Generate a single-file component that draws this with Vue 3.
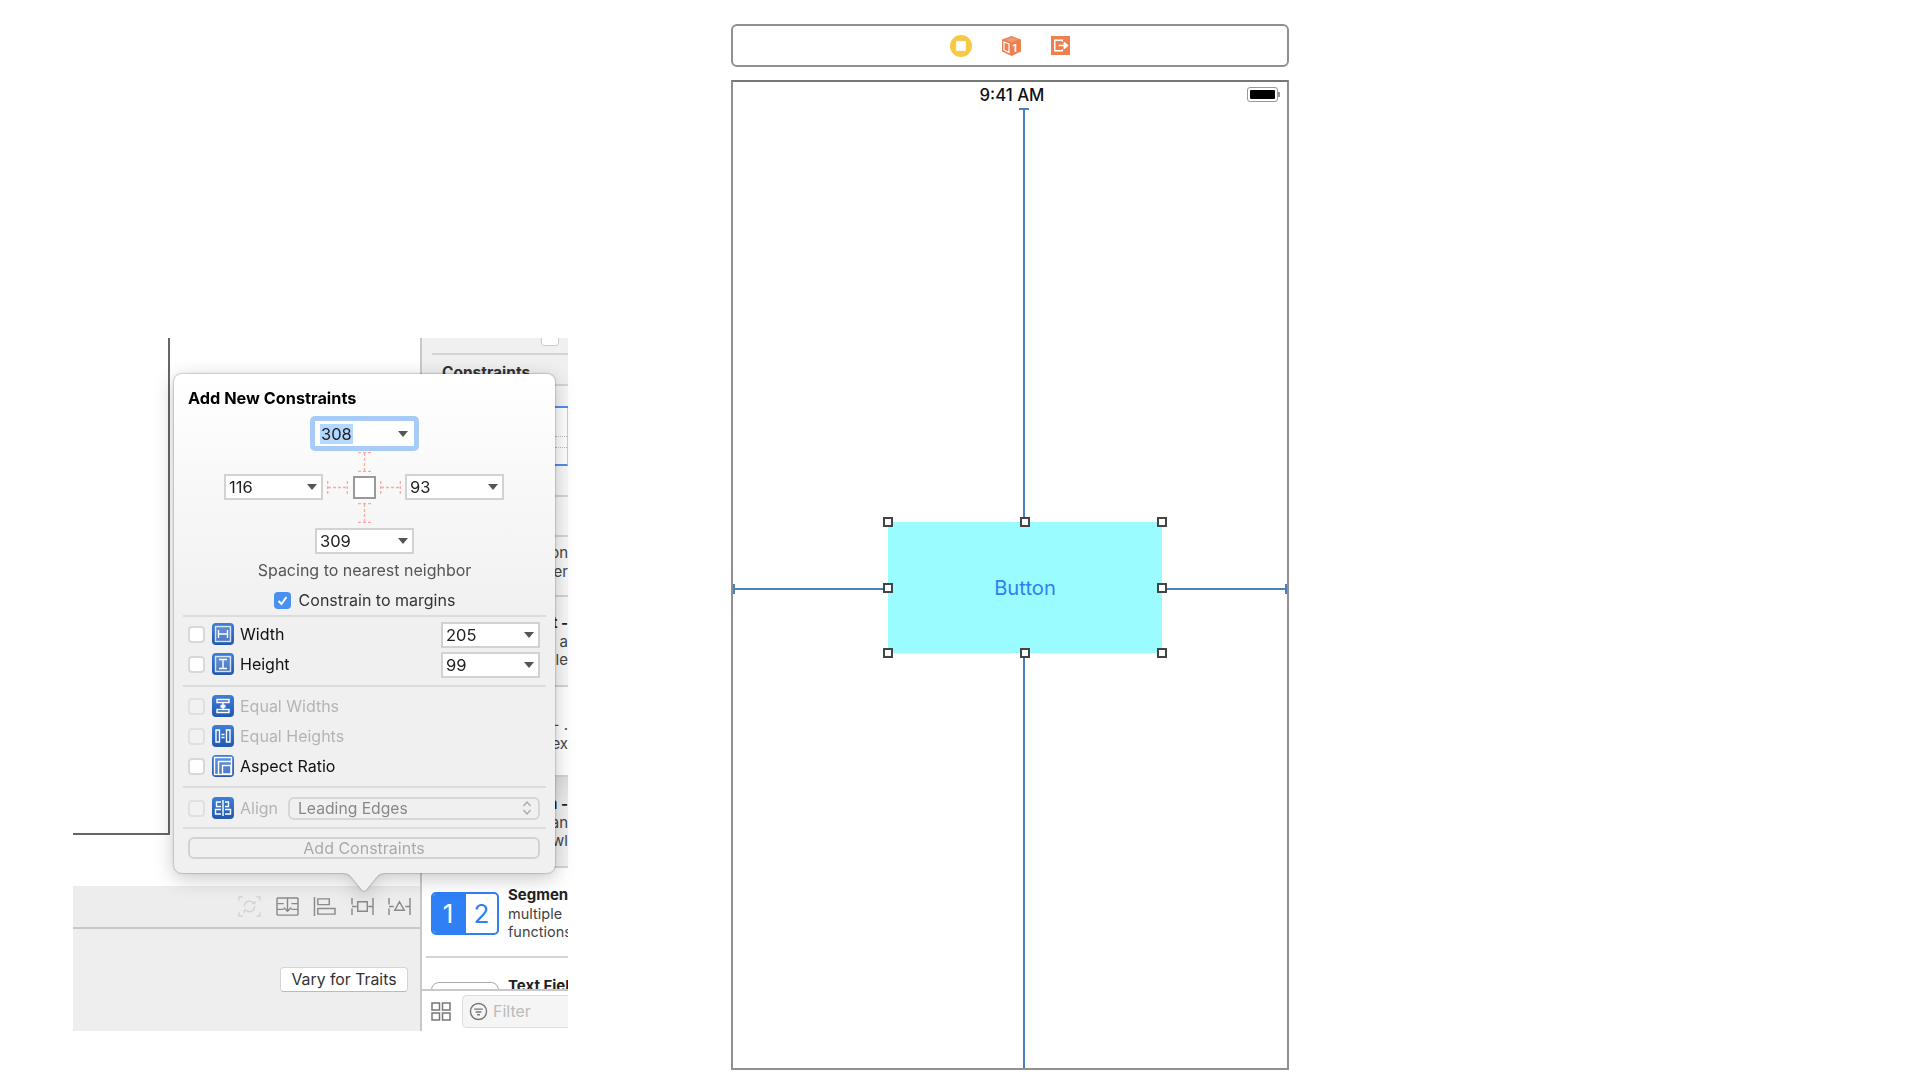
<script setup>
const rows1 = [
  { label: 'Width', icon: 'w', value: '205', on: true },
  { label: 'Height', icon: 'h', value: '99', on: true },
]
const rows2 = [
  { label: 'Equal Widths', icon: 'ew', on: false },
  { label: 'Equal Heights', icon: 'eh', on: false },
  { label: 'Aspect Ratio', icon: 'ar', on: true },
]
const handles = [
  [0, 0], [50, 0], [100, 0], [0, 50], [100, 50], [0, 100], [50, 100], [100, 100],
]
</script>

<template>
  <div class="page">
    <div class="shot">
      <div class="main-col">
        <div class="canvas"><div class="canvas-box"></div></div>
        <div class="toolbar">
          <svg class="tool dim" viewBox="0 0 24 22" fill="none" stroke="currentColor" stroke-width="1.3">
            <path d="M1 5V1h4M19 1h4v4M23 17v4h-4M5 21H1v-4" />
            <path d="M6.5 11a5.5 5.5 0 0 1 10-3.2M17.5 11a5.5 5.5 0 0 1-9 4.2" />
            <path d="M15 8h2.5V5M9 15H6.5v3" />
          </svg>
          <svg class="tool" viewBox="0 0 24 22" fill="none" stroke="currentColor" stroke-width="1.5">
            <path d="M1 2h22M1 20h22M1 2v18M23 2v18M1 8h7M16 8h7M1 14h7M16 14h7M12 3v13M8 12l4 4 4-4" />
          </svg>
          <svg class="tool" viewBox="0 0 24 22" fill="none" stroke="currentColor" stroke-width="1.5">
            <path d="M1.5 1v20M5 3h12v6H5zM5 13h18v6H5z" />
          </svg>
          <svg class="tool" viewBox="0 0 24 22" fill="none" stroke="currentColor" stroke-width="1.5">
            <path d="M1 2v7M1 13v7M1 11h5M23 2v18M18 11h5M7 6h10v10H7z" />
          </svg>
          <svg class="tool" viewBox="0 0 24 22" fill="none" stroke="currentColor" stroke-width="1.5">
            <path d="M1 2v7M1 13v7M1 11h5M23 2v18M18 11h5M12 6l5 9H7z" />
          </svg>
        </div>
        <div class="traits"><button class="vary">Vary for Traits</button></div>
      </div>

      <aside class="lib">
        <div class="lib-top">
          <div class="stub-box"></div>
          <div class="lib-rule"></div>
          <div class="lib-head">Constraints</div>
        </div>
        <div class="lib-stubs">
          <div class="stub s1"></div>
          <div class="stub s2"><i></i><i></i></div>
          <div class="stub s3"></div>
          <div class="stub s3b"></div>
          <div class="stub s4"><span>on</span><span>er</span></div>
          <div class="stub s5"><b>t -</b><span>s a</span><span>le</span></div>
          <div class="stub s6"><span>- .</span><span>ex</span></div>
          <div class="stub s7"><b>n -</b><span>an</span><span>wl</span></div>
        </div>
        <div class="lib-item seg-item">
          <div class="seg"><span class="seg-a">1</span><span class="seg-b">2</span></div>
          <div class="item-text">
            <b>Segmented</b>
            <span>multiple</span>
            <span>functions</span>
          </div>
        </div>
        <div class="lib-item tf-item">
          <div class="tf"></div>
          <b>Text Field</b>
        </div>
        <div class="lib-foot">
          <svg class="grid-ic" viewBox="0 0 20 19" fill="none" stroke="#777" stroke-width="1.5">
            <rect x="1" y="1" width="7.5" height="7" />
            <rect x="11.5" y="1" width="7.5" height="7" />
            <rect x="1" y="11" width="7.5" height="7" />
            <rect x="11.5" y="11" width="7.5" height="7" />
          </svg>
          <div class="filter">
            <svg class="filter-ic" viewBox="0 0 20 20" fill="none" stroke="#777" stroke-width="1.5">
              <circle cx="10" cy="10" r="8.5" />
              <path d="M5.5 7.5h9M7 10.5h6M8.5 13.5h3" />
            </svg>
            <span>Filter</span>
          </div>
        </div>
      </aside>

      <section class="pop">
        <h3>Add New Constraints</h3>
        <div class="cross">
          <div class="f-row">
            <div class="ring">
              <div class="field mid nob"><span class="sel">308</span><i class="caret"></i></div>
            </div>
          </div>
          <svg class="dash-v" viewBox="0 0 13 20" fill="none" stroke="#f8aaa5" stroke-width="1.3" stroke-dasharray="3 2">
            <path d="M0 .7h13M0 19.3h13M6.5 1v18" />
          </svg>
          <div class="f-mid">
            <div class="field wide"><span>116</span><i class="caret"></i></div>
            <svg class="dash-h" viewBox="0 0 21 13" fill="none" stroke="#f8aaa5" stroke-width="1.3" stroke-dasharray="3 2">
              <path d="M.7 0v13M20.3 0v13M1 6.5h19" />
            </svg>
            <div class="center-box"></div>
            <svg class="dash-h" viewBox="0 0 21 13" fill="none" stroke="#f8aaa5" stroke-width="1.3" stroke-dasharray="3 2">
              <path d="M.7 0v13M20.3 0v13M1 6.5h19" />
            </svg>
            <div class="field wide"><span>93</span><i class="caret"></i></div>
          </div>
          <svg class="dash-v low" viewBox="0 0 13 20" fill="none" stroke="#f8aaa5" stroke-width="1.3" stroke-dasharray="3 2">
            <path d="M0 .7h13M0 19.3h13M6.5 1v18" />
          </svg>
          <div class="f-row">
            <div class="field mid"><span>309</span><i class="caret"></i></div>
          </div>
          <p class="hint">Spacing to nearest neighbor</p>
          <div class="margins">
            <span class="check">
              <svg viewBox="0 0 17 17" fill="none" stroke="#fff" stroke-width="2"><path d="M4.5 9l3 3 5-7" /></svg>
            </span>
            <span>Constrain to margins</span>
          </div>
        </div>

        <div class="group g1">
          <div v-for="r in rows1" :key="r.label" class="row">
            <span class="box"></span>
            <span class="ic">
              <svg viewBox="0 0 22 22" fill="none" stroke="#fff" stroke-width="1.4">
                <rect x="3.5" y="3.5" width="15" height="15" fill="#fff" fill-opacity=".18" stroke-opacity=".8" />
                <path v-if="r.icon === 'w'" d="M6.5 7v8M15.5 7v8M6.5 11h9" />
                <path v-else d="M7 6.5h8M7 15.5h8M11 6.5v9" />
              </svg>
            </span>
            <span class="lab">{{ r.label }}</span>
            <div class="field wide push"><span>{{ r.value }}</span><i class="caret"></i></div>
          </div>
        </div>

        <div class="group g2">
          <div v-for="r in rows2" :key="r.label" class="row">
            <span class="box" :class="{ off: !r.on }"></span>
            <span class="ic">
              <svg viewBox="0 0 22 22" fill="none" stroke="#fff" stroke-width="1.4">
                <path v-if="r.icon === 'ew'" d="M5 4.5h12v3H5zM5 14.5h12v3H5zM8.5 10.5h5M8.5 12h5M11 8v6" />
                <path v-else-if="r.icon === 'eh'" d="M4 5h3.500v12H4zM14.5 5H18v12h-3.5zM9.5 9.5h3M9.5 12.500h3" />
                <template v-else>
                  <rect x="2.5" y="2.5" width="17" height="17" fill="#fff" fill-opacity=".18" />
                  <path d="M6.5 19V6.500H19" />
                  <rect x="10.5" y="10.5" width="8.5" height="8.5" />
                </template>
              </svg>
            </span>
            <span class="lab" :class="{ dim: !r.on }">{{ r.label }}</span>
          </div>
        </div>

        <div class="group g3">
          <div class="row">
            <span class="box off"></span>
            <span class="ic">
              <svg viewBox="0 0 22 22" fill="none" stroke="#fff" stroke-width="1.4">
                <path d="M11 3v16M9 5H4.5v4.5H9M13 5h3.500v4.500H13M9 12.500H3.500V17H9M13 12.500h5.500V17H13" />
              </svg>
            </span>
            <span class="lab dim short">Align</span>
            <div class="select">
              <span>Leading Edges</span>
              <svg viewBox="0 0 10 16" fill="none" stroke="#aaa" stroke-width="1.4"><path d="M1.500 6L5 2l3.500 4M1.500 10L5 14l3.500-4" /></svg>
            </div>
          </div>
        </div>

        <div class="add-wrap"><div class="add">Add Constraints</div></div>
        <svg class="arrow" viewBox="0 0 44 18"><path d="M0 0h44c-6 0-8 2-11 6l-9 11q-2 1.5-4 0l-9-11C8 2 6 0 0 0z" fill="#f0f0f0" /></svg>
      </section>
    </div>

    <div class="scene">
      <div class="dock">
        <svg class="d1" viewBox="0 0 22 22">
          <circle cx="11" cy="11" r="11" fill="#f6c945" />
          <rect x="6" y="6" width="10" height="10" fill="#fff" stroke="#e9d9a0" stroke-dasharray="1 1" />
        </svg>
        <svg class="d2" viewBox="0 0 21 20">
          <path d="M10.5 0l9.5 3.5v12L10.5 20 1 15.500v-12z" fill="#ee7f4f" />
          <path d="M3 6l5 2v8.500L3 14z" fill="none" stroke="#fff" stroke-width="1.2" />
          <path d="M4 3.800l6.500-2.300 6.500 2.300-6.500 2.600z" fill="#f29a72" />
          <text x="11.5" y="16" font-size="10" font-weight="700" fill="#fff">1</text>
        </svg>
        <svg class="d3" viewBox="0 0 20 20">
          <rect width="20" height="20" fill="#ee7f4f" />
          <path d="M12 6V4.500H4v11h8V14" fill="none" stroke="#fff" stroke-width="1.5" />
          <path d="M8 10h6M14 7l3.500 3-3.500 3z" fill="#fff" stroke="#fff" stroke-width="1.5" stroke-linejoin="round" />
        </svg>
      </div>

      <div class="device">
        <div class="status">
          <span class="time">9:41 AM</span>
          <span class="batt"><i></i></span>
        </div>

        <div class="btn-wrap">
          <div class="ui-btn">Button</div>
          <i class="c-v top"></i>
          <i class="c-v bottom"></i>
          <i class="c-h left"></i>
          <i class="c-h right"></i>
          <i
            v-for="(h, i) in handles"
            :key="i"
            class="handle"
            :style="{ left: h[0] + '%', top: h[1] + '%' }"
          ></i>
        </div>
      </div>
    </div>
  </div>
</template>

<style scoped>
.page {
  display: flex;
  align-items: flex-start;
  width: 1920px;
  height: 1080px;
  overflow: hidden;
  background: #fff;
  font-family: Inter, "Liberation Sans", sans-serif;
  color: #111;
}

/* left composite */
.shot {
  position: relative;
  display: flex;
  width: 495px;
  height: 693px;
  margin: 338px 0 0 73px;
}
.main-col {
  display: flex;
  flex-direction: column;
  width: 347px;
  flex: none;
}
.canvas {
  height: 548px;
  background: #fff;
}
.canvas-box {
  width: 95px;
  height: 495px;
  border-right: 2px solid #666;
  border-bottom: 2px solid #666;
}
.toolbar {
  display: flex;
  justify-content: flex-end;
  align-items: center;
  gap: 14.5px;
  height: 43px;
  box-sizing: border-box;
  padding-right: 9px;
  background: #ededed;
  border-bottom: 2px solid #c8c8c8;
  color: #8a8a8a;
}
.tool {
  width: 23px;
  height: 21px;
}
.tool.dim {
  color: #d0d0d0;
}
.traits {
  flex: 1;
  display: flex;
  justify-content: flex-end;
  align-items: flex-start;
  padding: 38px 12px 0 0;
  background: #eee;
}
.vary {
  width: 128px;
  height: 25px;
  padding: 0;
  border: 1px solid #d4d4d4;
  border-bottom-color: #bbb;
  border-radius: 4px;
  background: #fff;
  font: 400 15.8px Inter, "Liberation Sans", sans-serif;
  color: #333;
}

/* library */
.lib {
  display: flex;
  flex-direction: column;
  width: 148px;
  flex: none;
  border-left: 2px solid #c8c8c8;
  box-sizing: border-box;
  overflow: hidden;
  font-size: 14.5px;
  color: #444;
}
.lib-top {
  height: 46px;
  flex: none;
  padding-left: 10px;
  background: #f0f0f0;
  position: relative;
}
.stub-box {
  position: absolute;
  left: 119px;
  top: -8px;
  width: 16px;
  height: 14px;
  background: #fff;
  border: 1px solid #ccc;
  border-radius: 3px;
}
.lib-rule {
  height: 2px;
  margin-top: 15px;
  background: #d4d4d4;
}
.lib-head {
  padding: 8px 0 0 10px;
  font-weight: 700;
  font-size: 15.5px;
  color: #333;
}
.lib-stubs {
  display: flex;
  flex-direction: column;
  flex: none;
  height: 484px;
  background: #fff;
}
.stub {
  display: flex;
  flex-direction: column;
  align-items: flex-end;
  flex: none;
  white-space: nowrap;
  overflow: hidden;
  font-size: 15px;
  line-height: 18.5px;
  box-sizing: border-box;
  border-bottom: 2px solid #d4d4d4;
  border-top: 0;
  background: #f8f8f8;
}
.s1 {
  height: 24px;
  border-bottom: 2px solid #4f8fe8;
  background: #f6f6f6;
  border-top: 2px solid #d4d4d4;
}
.s2 {
  height: 58px;
  border-bottom: 2px solid #4f8fe8;
  border-right: 1px solid #ccc;
  padding-top: 28px;
  gap: 10px;
  background: #fff;
}
.s2 i {
  display: block;
  width: 12px;
  border-top: 1px dotted #bbb;
}
.s3 {
  height: 31px;
}
.s3b {
  height: 40px;
}
.s4 {
  height: 60px;
  padding-top: 7px;
}
.s5 {
  height: 90px;
  padding-top: 17px;
}
.s6 {
  height: 90px;
  padding-top: 29px;
  background: #fff;
}
.s7 {
  height: 91px;
  padding-top: 11px;
  background: linear-gradient(#dfdfdf, #f0f0f0 35%, #f2f2f2);
}
.s7 b,
.s5 b {
  color: #222;
}
.s7 b {
  margin-top: 7px;
}
.lib-item {
  display: flex;
  flex: none;
  background: #fff;
  white-space: nowrap;
}
.seg-item {
  gap: 9px;
  height: 90px;
  padding: 24px 0 0 9px;
  box-sizing: border-box;
  position: relative;
}
.seg-item::after {
  content: "";
  position: absolute;
  left: 4px;
  right: 0;
  bottom: 0;
  height: 2px;
  background: #d4d4d4;
}
.seg {
  display: flex;
  width: 68px;
  height: 43px;
  flex: none;
  box-sizing: border-box;
  border: 2px solid #2f7ff5;
  border-radius: 5px;
  overflow: hidden;
  font-size: 26px;
  line-height: 39px;
  text-align: center;
}
.seg-a {
  width: 33px;
  padding-right: 3px;
  box-sizing: border-box;
  background: #2f7ff5;
  color: #fff;
}
.seg-b {
  flex: 1;
  color: #2f7ff5;
}
.item-text {
  display: flex;
  flex-direction: column;
  line-height: 18.5px;
  font-size: 14.5px;
  margin-top: -6px;
}
.item-text b,
.tf-item b {
  font-size: 15px;
  color: #222;
}
.tf-item {
  height: 31px;
  gap: 9px;
  padding: 18px 0 0 9px;
  box-sizing: border-box;
  overflow: hidden;
}
.tf {
  width: 66px;
  height: 24px;
  flex: none;
  margin-top: 6px;
  border: 1px solid #aaa;
  border-radius: 8px;
}
.lib-foot {
  flex: 1;
  display: flex;
  align-items: center;
  gap: 11px;
  padding-left: 9px;
  background: #fff;
  border-top: 2px solid #c8c8c8;
}
.grid-ic {
  width: 20px;
  height: 19px;
  flex: none;
}
.filter {
  flex: 1;
  display: flex;
  align-items: center;
  gap: 5px;
  height: 31px;
  padding-left: 6px;
  border: 1px solid #ddd;
  border-right: 0;
  border-radius: 5px 0 0 5px;
  background: #f5f5f5;
  color: #bbb;
  font-size: 16px;
}
.filter-ic {
  width: 19px;
  height: 19px;
  flex: none;
}

/* popover */
.pop {
  position: absolute;
  left: 101px;
  top: 36px;
  width: 381px;
  height: 499px;
  box-sizing: border-box;
  padding: 14px 0 0;
  border-radius: 8px;
  background: linear-gradient(#fff 0, #f0f0f0 50%, #f0f0f0 100%);
  filter: drop-shadow(0 0 1px rgba(0, 0, 0, .4)) drop-shadow(0 5px 10px rgba(0, 0, 0, .22));
  font-size: 16px;
}
.pop h3 {
  margin: 0;
  padding-left: 14px;
  font-size: 16.3px;
  line-height: 20px;
  font-weight: 700;
  color: #000;
}
.cross {
  display: flex;
  flex-direction: column;
  align-items: center;
  padding-top: 8px;
}
.f-row {
  display: flex;
  justify-content: center;
}
.ring {
  padding: 5px;
  border-radius: 5px;
  background: #a6cbf8;
}
.field {
  position: relative;
  display: flex;
  align-items: center;
  box-sizing: border-box;
  height: 26px;
  padding-left: 3px;
  background: #fff;
  border: 2px solid #d2d2d2;
  font-size: 16.5px;
  color: #222;
}
.field.mid,
.field.wide {
  width: 99px;
}
.field.nob {
  height: 25px;
  border-color: #fff;
}
.sel {
  padding: 0 1px;
  background: #b3d7ff;
  line-height: 20px;
}
.caret {
  position: absolute;
  right: 4px;
  top: 50%;
  margin-top: -3px;
  border-left: 5px solid transparent;
  border-right: 5px solid transparent;
  border-top: 6px solid #555;
}
.dash-v {
  display: block;
  width: 13px;
  height: 20px;
  margin: 1px 0 2px;
}
.dash-v.low {
  margin: 3px 0 5px;
}
.f-mid {
  display: flex;
  align-items: center;
  justify-content: space-between;
  width: 280px;
  margin-left: -1px;
}
.dash-h {
  display: block;
  width: 21px;
  height: 13px;
}
.center-box {
  width: 23px;
  height: 23px;
  box-sizing: border-box;
  border: 2px solid #999;
  background: #fff;
}
.hint {
  margin: 7px 0 0;
  line-height: 18px;
  color: #555;
  font-size: 16px;
}
.margins {
  display: flex;
  align-items: center;
  gap: 8px;
  margin-top: 11px;
  color: #333;
}
.check {
  width: 17px;
  height: 17px;
  border-radius: 4px;
  background: #4a90f0;
  display: block;
}
.check svg {
  display: block;
}
.group {
  display: flex;
  flex-direction: column;
  margin: 0 9px;
  padding-left: 5px;
  padding-right: 6px;
  border-top: 2px solid #dcdcdc;
  box-sizing: border-box;
}
.g1 {
  margin-top: 5px;
  height: 70px;
  padding-top: 6px;
  gap: 8px;
}
.g2 {
  height: 101px;
  padding-top: 8px;
  gap: 8px;
}
.g3 {
  height: 43px;
  padding-top: 9px;
  border-bottom: 2px solid #dcdcdc;
}
.row {
  display: flex;
  align-items: center;
  height: 22px;
}
.box {
  width: 17px;
  height: 17px;
  flex: none;
  box-sizing: border-box;
  background: #fff;
  border: 2px solid #d8d8d8;
  border-radius: 4px;
}
.box.off {
  background: #f1f1f1;
  border-color: #e0e0e0;
}
.ic {
  width: 22px;
  height: 22px;
  flex: none;
  margin: 0 6px 0 7px;
  border-radius: 4px;
  background: linear-gradient(#3f7ed8, #2458ae);
}
.ic svg {
  display: block;
}
.lab {
  color: #111;
}
.lab.dim {
  color: #b4b4b4;
}
.lab.short {
  width: 48px;
  flex: none;
}
.push {
  margin-left: auto;
  margin-top: 2px;
}
.select {
  flex: 1;
  display: flex;
  align-items: center;
  justify-content: space-between;
  height: 23px;
  box-sizing: border-box;
  padding: 0 6px 0 8px;
  border: 2px solid #d6d6d6;
  border-radius: 6px;
  font-size: 15.7px;
  color: #888;
}
.select svg {
  width: 10px;
  height: 16px;
}
.add-wrap {
  padding: 8px 15px 0 14px;
}
.add {
  height: 22px;
  box-sizing: border-box;
  border: 2px solid #d2d2d2;
  border-radius: 6px;
  text-align: center;
  line-height: 18px;
  color: #aaa;
}
.arrow {
  position: absolute;
  left: 168px;
  top: 499px;
  width: 44px;
  height: 18px;
  display: block;
}

/* scene */
.scene {
  display: flex;
  flex-direction: column;
  width: 558px;
  margin: 24px 0 0 163px;
  gap: 13px;
}
.dock {
  display: flex;
  align-items: center;
  height: 43px;
  box-sizing: border-box;
  padding-left: 217px;
  border: 2px solid #909090;
  border-radius: 6px;
}
.d1 {
  width: 22px;
  height: 22px;
}
.d2 {
  width: 21px;
  height: 20px;
  margin-left: 29px;
}
.d3 {
  width: 19px;
  height: 19px;
  margin-left: 29px;
}
.device {
  height: 990px;
  box-sizing: border-box;
  border: 2px solid #909090;
  border-top-color: #777;
  position: relative;
}
.status {
  position: relative;
  display: flex;
  justify-content: center;
  align-items: center;
  height: 26px;
  padding-left: 4px;
}
.time {
  font-size: 16.8px;
  font-weight: 500;
  color: #111;
}
.batt {
  position: absolute;
  right: 9px;
  top: 5px;
  width: 31px;
  height: 15px;
  box-sizing: border-box;
  padding: 2px;
  border: 1px solid #999;
  border-radius: 3px;
}
.batt::after {
  content: "";
  position: absolute;
  right: -3px;
  top: 4px;
  width: 2px;
  height: 5px;
  background: #999;
}
.batt i {
  display: block;
  height: 100%;
  background: #000;
  border-radius: 1px;
}
.btn-wrap {
  position: relative;
  width: 274px;
  height: 131px;
  margin: 414px 0 0 155px;
}
.ui-btn {
  display: flex;
  align-items: center;
  justify-content: center;
  height: 100%;
  background: #9afcfe;
  color: #2f80f0;
  font-size: 20.2px;
}
.handle {
  position: absolute;
  width: 10px;
  height: 10px;
  margin: -5px 0 0 -5px;
  box-sizing: border-box;
  background: #fff;
  border: 2px solid #444;
}
.c-v,
.c-h {
  position: absolute;
  background: #4a7fc1;
}
.c-v {
  left: 135px;
  width: 2px;
}
.c-v.top {
  top: -414px;
  height: 414px;
}
.c-v.top::before {
  content: "";
  position: absolute;
  left: -4px;
  top: 0;
  width: 10px;
  height: 2px;
  background: #4a7fc1;
}
.c-v.bottom {
  top: 131px;
  height: 415px;
}
.c-h {
  top: 66px;
  height: 2px;
}
.c-h.left {
  left: -155px;
  width: 155px;
}
.c-h.right {
  left: 274px;
  width: 125px;
}
.c-h.left::before,
.c-h.right::after {
  content: "";
  position: absolute;
  top: -4px;
  width: 2px;
  height: 10px;
  background: #4a7fc1;
}
.c-h.left::before {
  left: 0;
}
.c-h.right::after {
  right: 0;
}
</style>
